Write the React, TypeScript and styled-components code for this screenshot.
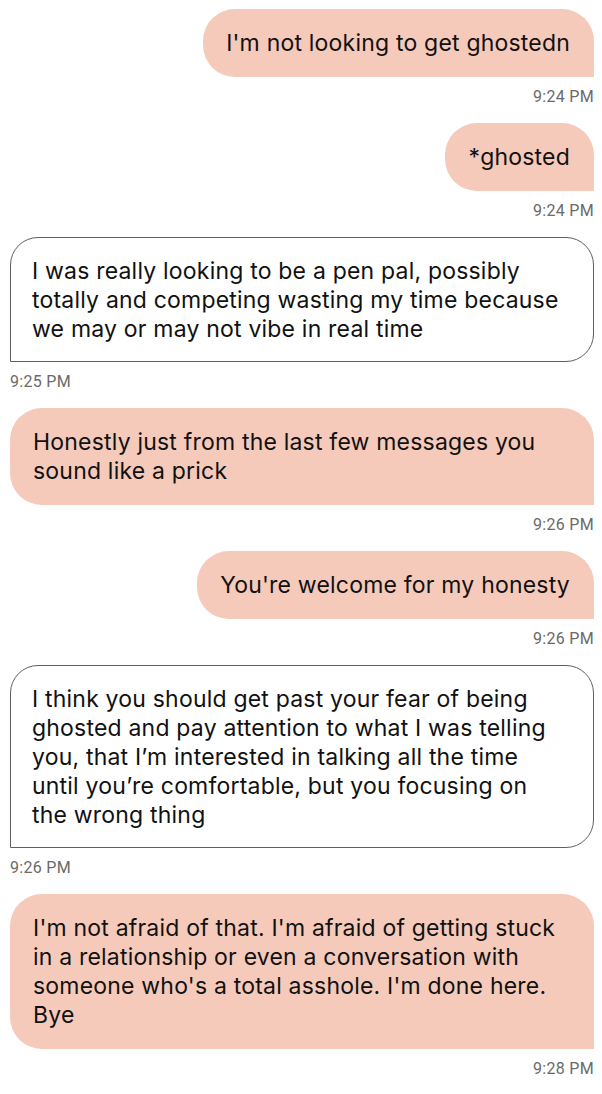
import styled, { createGlobalStyle } from 'styled-components'

const GlobalStyle = createGlobalStyle`
    html, body {
        margin: 0;
        padding: 0;
        background: #ffffff;
    }
    body {
        font-family: Inter, "Noto Sans", sans-serif;
        -webkit-font-smoothing: antialiased;
    }
`

const Thread = styled.div`
    display: flex;
    flex-direction: column;
    width: 602px;
    box-sizing: border-box;
    padding: 9px 8px 0 10px;
`

const Group = styled.div<{ $mine: boolean }>`
    display: flex;
    flex-direction: column;
    align-items: ${p => (p.$mine ? 'flex-end' : 'flex-start')};
    margin-bottom: 17px;
`

const Bubble = styled.div<{ $mine: boolean }>`
    box-sizing: border-box;
    max-width: 100%;
    width: ${p => (p.$mine ? 'fit-content' : '100%')};
    padding: ${p => (p.$mine ? '20px 24px 19px 23px' : '18.5px 24px 17.5px 21px')};
    font-size: 23px;
    line-height: 29px;
    letter-spacing: 0.2px;
    color: #111111;
    background: ${p => (p.$mine ? '#f5cabb' : '#ffffff')};
    border: ${p => (p.$mine ? 'none' : '1.5px solid #5f5f5f')};
    border-radius: ${p => (p.$mine ? '32px 32px 0 32px' : '28px 28px 28px 0')};
`

const Time = styled.div`
    margin-top: 11px;
    font-family: Roboto, "Liberation Sans", sans-serif;
    font-size: 16px;
    line-height: 18px;
    letter-spacing: 0.3px;
    color: #6a6a6a;
`

type Message = { text: string; time: string; mine: boolean }

const messages: Message[] = [
    { text: "I'm not looking to get ghostedn", time: '9:24 PM', mine: true },
    { text: '*ghosted', time: '9:24 PM', mine: true },
    {
        text: 'I was really looking to be a pen pal, possibly totally and competing wasting my time because we may or may not vibe in real time',
        time: '9:25 PM',
        mine: false,
    },
    {
        text: 'Honestly just from the last few messages you sound like a prick',
        time: '9:26 PM',
        mine: true,
    },
    { text: "You're welcome for my honesty", time: '9:26 PM', mine: true },
    {
        text: 'I think you should get past your fear of being ghosted and pay attention to what I was telling you, that I\u2019m interested in talking all the time until you\u2019re comfortable, but you focusing on the wrong thing',
        time: '9:26 PM',
        mine: false,
    },
    {
        text: "I'm not afraid of that. I'm afraid of getting stuck in a relationship or even a conversation with someone who's a total asshole. I'm done here. Bye",
        time: '9:28 PM',
        mine: true,
    },
]

const App = () => {
    return (
        <>
            <GlobalStyle />
            <Thread>
                {messages.map((m, i) => (
                    <Group key={i} $mine={m.mine}>
                        <Bubble $mine={m.mine}>{m.text}</Bubble>
                        <Time>{m.time}</Time>
                    </Group>
                ))}
            </Thread>
        </>
    )
}

export default App
